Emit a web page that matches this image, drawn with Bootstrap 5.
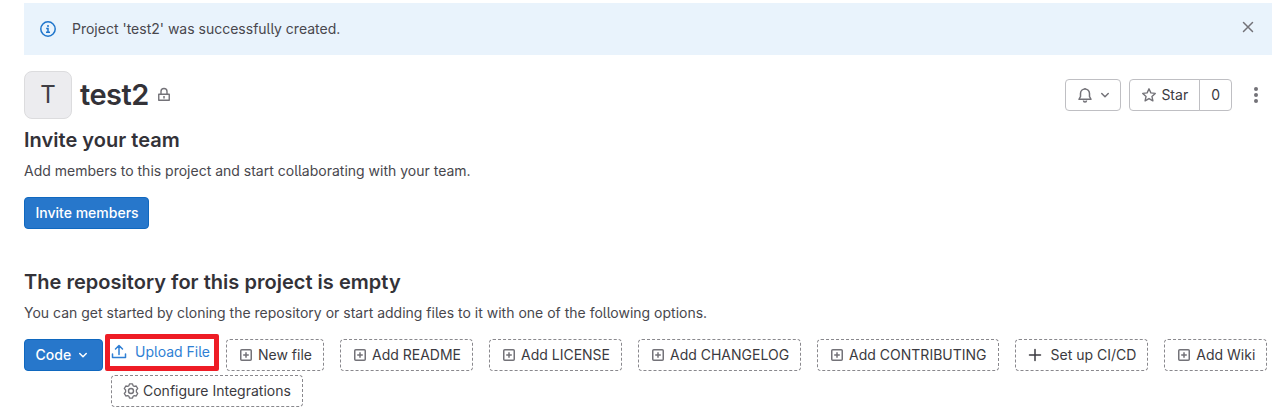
<!DOCTYPE html>
<html lang="en">
<head>
<meta charset="utf-8">
<meta name="viewport" content="width=device-width, initial-scale=1">
<title>test2</title>
<link href="https://cdn.jsdelivr.net/npm/bootstrap@5.3.0/dist/css/bootstrap.min.css" rel="stylesheet">
<style>
body{font-family:Inter,"Liberation Sans",sans-serif;font-size:14px;line-height:20px;color:#48474d;background:#fff;overflow:hidden}
svg{flex:none;display:block}
.page{padding:3px 1px 0 24px}
.notice{background:#e9f3fc;height:52px;padding:16px;margin-bottom:16px}
.prose{font-feature-settings:"cv05"}
.gray{color:#737278}
.avatar{width:48px;height:48px;border:1px solid #dcdcde;border-radius:8px;background:#ececef;font-size:24px;color:#3f3e44}
h1{font-size:29px;line-height:36px;font-weight:600;color:#333238;letter-spacing:-.5px}
.lock{margin-left:7px}
h2{font-size:20px;line-height:24px;font-weight:600;color:#333238;letter-spacing:.03px}
.lead-in{margin:9px 0 16px}
.btn{--bs-btn-font-size:14px;--bs-btn-line-height:16px;--bs-btn-padding-x:11px;--bs-btn-padding-y:7px;--bs-btn-border-radius:4px;height:32px;white-space:nowrap;--bs-btn-color:#3b3a40}
.btn-line{--bs-btn-border-color:#bfbfc3}
.bell-btn{width:56px}
.btn-primary{--bs-btn-bg:#2777cb;--bs-btn-border-color:#1068bf;--bs-btn-color:#fff;--bs-btn-font-weight:500;--bs-btn-padding-x:10.5px}
.invite-btn{width:125px}
.btn-dash{border:1px dashed #89888d}
.tools{margin-right:8px}
.team{padding-top:9px}
.repo{padding-top:41px}
.actions{column-gap:16px}
.code-btn{width:79px}
.upload{width:114px;height:37px;border:5px solid #ee1c25;border-radius:2px;color:#2f7fd4;margin:-5px -9px 0 2px;padding:0 0 1px 1px}
.second-row{margin:4px 0 0 87px}
</style>
</head>
<body>
<svg class="d-none" xmlns="http://www.w3.org/2000/svg">
<symbol id="plus-box" viewBox="0 0 16 16"><path d="M3.750 2.750h8.500a1 1 0 0 1 1 1v8.500a1 1 0 0 1-1 1h-8.500a1 1 0 0 1-1-1v-8.500a1 1 0 0 1 1-1zM8 5.200v5.600M5.200 8h5.600" fill="none" stroke="currentColor" stroke-width="1.500"/></symbol>
<symbol id="chev" viewBox="0 0 16 16"><path d="M4.750 6.500 8 9.750l3.250-3.250" fill="none" stroke="currentColor" stroke-width="1.500" stroke-linecap="round" stroke-linejoin="round"/></symbol>
</svg>
<main class="page">
<div class="notice d-flex align-items-start">
<svg width="16" height="20" viewBox="0 -2 16 20" style="color:#1f75cb"><circle cx="8" cy="8" r="7.200" fill="none" stroke="currentColor" stroke-width="1.500"/><path d="M6.200 7.500H8v3.700M6 11.300h4" fill="none" stroke="currentColor" stroke-width="1.500"/><circle cx="8" cy="4.900" r="1" fill="currentColor"/></svg>
<span class="prose ms-3">Project 'test2' was successfully created.</span>
<svg class="gray ms-auto" width="16" height="16" viewBox="0 0 16 16"><path d="m3.500 3.500 9 9m0-9-9 9" stroke="currentColor" stroke-width="1.500" stroke-linecap="round"/></svg>
</div>
<header class="d-flex align-items-center">
<div class="avatar d-flex align-items-center justify-content-center">T</div>
<h1 class="mb-0 ms-2">test2</h1>
<svg class="gray lock" width="16" height="16" viewBox="0 0 16 16"><path d="M2.750 7.250h10.500v6h-10.500zM5 7V4.500a3 3 0 0 1 6 0V7" fill="none" stroke="currentColor" stroke-width="1.400" stroke-linejoin="round"/><path d="M8 9v2.500" stroke="currentColor" stroke-width="1.500"/></svg>
<div class="tools d-flex align-items-center ms-auto">
<button class="btn btn-line bell-btn d-flex align-items-center me-2" aria-label="Notifications"><svg class="gray" width="16" height="16" viewBox="0 0 16 16"><path d="M8 1v1M2 12.250h12L12.500 9.500V6.500a4.500 4.500 0 0 0-9 0v3zM6.500 13.500a1.500 1.500 0 0 0 3 0" fill="none" stroke="currentColor" stroke-width="1.500" stroke-linejoin="round"/></svg><svg class="gray ms-1" width="16" height="16"><use href="#chev"/></svg></button>
<div class="btn-group"><button class="btn btn-line d-flex align-items-center gap-1"><svg class="gray" width="16" height="16" viewBox="0 0 16 16"><path d="m8 1.800 1.850 4.100 4.400.5-3.300 3 .95 4.400L8 11.550 4.100 13.800l.95-4.400-3.300-3 4.400-.5z" fill="none" stroke="currentColor" stroke-width="1.400" stroke-linejoin="round"/></svg>Star</button><button class="btn btn-line">0</button></div>
<svg class="gray ms-3" width="16" height="16" viewBox="0 0 16 16" fill="currentColor"><circle cx="8" cy="2" r="2"/><circle cx="8" cy="8" r="2"/><circle cx="8" cy="14" r="2"/></svg>
</div>
</header>
<section class="team">
<h2 class="mb-0">Invite your team</h2>
<p class="prose lead-in">Add members to this project and start collaborating with your team.</p>
<button class="btn btn-primary invite-btn">Invite members</button>
</section>
<section class="repo">
<h2 class="mb-0">The repository for this project is empty</h2>
<p class="prose lead-in">You can get started by cloning the repository or start adding files to it with one of the following options.</p>
<div class="actions d-flex">
<div class="d-flex"><button class="btn btn-primary code-btn d-flex align-items-center gap-1">Code<svg width="16" height="16"><use href="#chev"/></svg></button>
<a class="upload d-flex align-items-center text-decoration-none"><svg width="16" height="16" viewBox="0 0 16 16"><path d="M8 10.500V2M4.500 5 8 1.500 11.500 5M1.500 10v3.500h13V10" fill="none" stroke="currentColor" stroke-width="1.500" stroke-linecap="round" stroke-linejoin="round"/></svg><span class="prose ms-2">Upload File</span></a></div>
<button class="btn btn-dash d-flex align-items-center gap-1"><svg class="gray" width="16" height="16"><use href="#plus-box"/></svg>New file</button>
<button class="btn btn-dash d-flex align-items-center gap-1"><svg class="gray" width="16" height="16"><use href="#plus-box"/></svg>Add README</button>
<button class="btn btn-dash d-flex align-items-center gap-1"><svg class="gray" width="16" height="16"><use href="#plus-box"/></svg>Add LICENSE</button>
<button class="btn btn-dash d-flex align-items-center gap-1"><svg class="gray" width="16" height="16"><use href="#plus-box"/></svg>Add CHANGELOG</button>
<button class="btn btn-dash d-flex align-items-center gap-1"><svg class="gray" width="16" height="16"><use href="#plus-box"/></svg>Add CONTRIBUTING</button>
<button class="btn btn-dash d-flex align-items-center gap-2"><svg width="16" height="16" viewBox="0 0 16 16"><path d="M8 2.500v11M2.500 8h11" stroke="currentColor" stroke-width="1.500" stroke-linecap="round"/></svg>Set up CI/CD</button>
<button class="btn btn-dash d-flex align-items-center gap-1"><svg class="gray" width="16" height="16"><use href="#plus-box"/></svg>Add Wiki</button>
</div>
<button class="btn btn-dash d-flex align-items-center gap-1 second-row"><svg class="gray" width="16" height="16" viewBox="0 0 16 16"><path d="m6.500.9h3l.6 1.800 1.200.7 1.900-.4 1.500 2.600L13.400 7v2l1.300 1.400-1.500 2.600-1.900-.4-1.200.7-.6 1.800h-3l-.6-1.800-1.200-.7-1.900.4-1.500-2.600L2.600 9V7L1.300 5.600 2.800 3l1.900.4 1.200-.7z" fill="none" stroke="currentColor" stroke-width="1.300" stroke-linejoin="round"/><circle cx="8" cy="8" r="2.500" fill="none" stroke="currentColor" stroke-width="1.400"/></svg>Configure Integrations</button>
</section>
</main>
<script src="https://cdn.jsdelivr.net/npm/bootstrap@5.3.0/dist/js/bootstrap.bundle.min.js"></script>
</body>
</html>
